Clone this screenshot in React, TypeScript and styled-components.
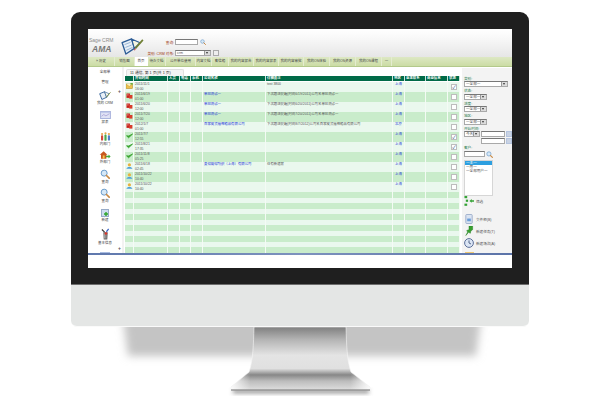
import React from "react";
import styled, { createGlobalStyle } from "styled-components";

const Global = createGlobalStyle`
  html, body { margin: 0; padding: 0; background: #fff; }
  body { font-family: "Liberation Sans", "Noto Sans CJK SC", sans-serif; overflow: hidden; }
`;

const cjk = `"Liberation Sans", "Noto Sans CJK SC", sans-serif`;

const Page = styled.div`
  width: 600px;
  height: 401px;
  padding-top: 12px;
  box-sizing: border-box;
  display: flex;
  flex-direction: column;
  align-items: center;
  overflow: hidden;
`;
const Bezel = styled.div`
  width: 458px;
  box-sizing: border-box;
  padding: 17px 17px 16px;
  background: #1f1f1f;
  border-radius: 9px 9px 0 0;
`;
const Screen = styled.div`
  height: 239px;
  background: #fff;
  display: flex;
  flex-direction: column;
  overflow: hidden;
  font-family: ${cjk};
`;
const Chin = styled.div`
  width: 458px;
  height: 43px;
  box-sizing: border-box;
  background: #e4e6e5;
  border-top: 1.5px solid #6d6d6d;
  border-bottom: 1px solid #fafafa;
  border-radius: 0 0 6px 6px;
`;
const StandArt = styled.svg`
  display: block;
  flex: none;
`;

const Header = styled.div`
  height: 28px;
  flex: none;
  display: flex;
  background: linear-gradient(#ffffff, #fafafa 25%, #e6e6e6);
`;
const Brand = styled.div`
  width: 27px;
  flex: none;
  padding: 8px 0 0 1px;
  font-size: 5px;
  line-height: 6px;
  color: #8b8b8b;
  white-space: nowrap;
`;
const BrandMark = styled.div`
  margin: 2px 0 0 3px;
  font-size: 8.5px;
  line-height: 9px;
  font-weight: 700;
  font-style: italic;
  color: #777;
`;
const BookArt = styled.svg`
  flex: none;
  margin: 9px 0 0 5px;
`;
const SearchBox = styled.div`
  margin: 9px 0 0 1px;
  display: grid;
  grid-template-columns: 30px auto;
  row-gap: 3px;
  align-items: center;
`;
const SearchLabel = styled.div`
  font-size: 3.6px;
  text-align: right;
  padding-right: 1px;
  color: #a03a10;
  white-space: nowrap;
`;
const SearchRow = styled.div`
  display: flex;
  align-items: center;
  gap: 2px;
`;
const Field = styled.div<{ $w: number; $h?: number; $hidden?: boolean }>`
  width: ${(p) => p.$w}px;
  height: ${(p) => p.$h ?? 6}px;
  box-sizing: border-box;
  flex: none;
  visibility: ${(p) => (p.$hidden ? "hidden" : "visible")};
  background: #fff;
  border: 1px solid #a9a9a9;
  border-top-color: #777;
  font-size: 3.6px;
  line-height: 4px;
  color: #555;
  padding-left: 1px;
  position: relative;
  white-space: nowrap;
`;
const SelectArrow = styled.span`
  position: absolute;
  right: 0;
  top: 0;
  bottom: 0;
  width: 5px;
  background: #dcdcdc;
  border-left: 1px solid #999;
  &::after {
    content: "";
    position: absolute;
    left: 1px;
    top: 1.2px;
    border: 1.5px solid transparent;
    border-top: 2px solid #333;
  }
`;
const MiniButton = styled.div<{ $blue?: boolean }>`
  width: 6px;
  height: 6px;
  box-sizing: border-box;
  flex: none;
  border: 1px solid ${(p) => (p.$blue ? "#b5c4de" : "#aaa")};
  background: ${(p) => (p.$blue ? "#c9d3e4" : "#eee")};
`;

const TabBar = styled.div`
  height: 10px;
  flex: none;
  display: flex;
  align-items: flex-end;
  background: linear-gradient(#dde8c4, #cbdca4);
  border-bottom: 1px solid #b3c98b;
  box-sizing: border-box;
`;
const Tab = styled.div<{ $w: number; $active?: boolean }>`
  width: ${(p) => p.$w}px;
  flex: none;
  height: 9px;
  line-height: 9px;
  font-size: 3.5px;
  text-align: center;
  color: #444;
  white-space: nowrap;
  overflow: hidden;
  background: ${(p) => (p.$active ? "#fff" : "transparent")};
  border-right: 1px solid ${(p) => (p.$active ? "#fff" : "#e4ecd0")};
  box-sizing: border-box;
`;

const Main = styled.div`
  height: 186px;
  flex: none;
  display: flex;
`;
const Sidebar = styled.div`
  width: 34px;
  flex: none;
  display: flex;
  flex-direction: column;
  align-items: center;
  border-right: 2px solid #f2f2f2;
  padding-top: 2px;
  position: relative;
  overflow: hidden;
`;
const SideItem = styled.div<{ $h: number }>`
  height: ${(p) => p.$h}px;
  flex: none;
  display: flex;
  flex-direction: column;
  align-items: center;
  justify-content: flex-end;
  gap: 1px;
`;
const SideText = styled.div`
  font-size: 3.5px;
  line-height: 5px;
  color: #444;
  white-space: nowrap;
`;
const SideMark = styled.div<{ $top: number }>`
  position: absolute;
  right: 1px;
  top: ${(p) => p.$top}px;
  font-size: 5px;
  line-height: 5px;
  font-weight: 700;
  color: #555;
`;
const SidePeek = styled.div`
  margin-top: 6px;
  width: 10px;
  height: 4px;
  flex: none;
  background: #d3def3;
  border-top: 1px solid #a9bce0;
`;

const Content = styled.div`
  width: 338px;
  flex: none;
  padding: 2px 0 0 1px;
  box-sizing: border-box;
`;
const PageTab = styled.div`
  width: 58px;
  height: 7px;
  box-sizing: border-box;
  margin-left: 1px;
  background: #f4f4f4;
  border: 1px solid #e0e0e0;
  border-bottom: none;
  border-radius: 2px 2px 0 0;
  font-size: 3.8px;
  line-height: 6px;
  padding-left: 3px;
  color: #333;
  white-space: nowrap;
`;

const columns = "9px 34px 12px 11px 12px 63px 127px 12px 21px 22px 12px";

const TableHead = styled.div`
  display: grid;
  grid-template-columns: ${columns};
  height: 5px;
  width: 335px;
  background: #006b48;
  margin-bottom: 1px;
`;
const HeadCell = styled.div`
  font-size: 3.4px;
  line-height: 5px;
  color: #fff;
  font-weight: 700;
  padding-left: 1px;
  border-right: 1px solid #cfe5d8;
  box-sizing: border-box;
  white-space: nowrap;
  overflow: hidden;
`;
const Row = styled.div<{ $alt: boolean; $h: number }>`
  display: grid;
  grid-template-columns: ${columns};
  width: 335px;
  height: ${(p) => p.$h}px;
  background: ${(p) => (p.$alt ? "#c9eccb" : "#eaf8ee")};
`;
const Cell = styled.div`
  border-right: 1px solid #f4fbf5;
  box-sizing: border-box;
  font-size: 3.4px;
  line-height: 5px;
  color: #555;
  padding-left: 1px;
  white-space: nowrap;
  overflow: hidden;
`;
const IconCell = styled(Cell)`
  padding-top: 1px;
`;
const LinkCell = styled(Cell)`
  color: #1d35d8;
`;
const CityCell = styled(LinkCell)`
  text-align: center;
  padding-left: 0;
`;
const CheckCell = styled(Cell)`
  padding: 1.5px 0 0 3px;
`;
const CheckBox = styled.div`
  width: 6px;
  height: 6px;
  box-sizing: border-box;
  background: #fff;
  border: 1px solid #bdbdbd;
  font-size: 5px;
  line-height: 4px;
  color: #123a7a;
  text-align: center;
`;

const Panel = styled.div`
  flex: 1;
  min-width: 0;
  background: #f3f3f3;
  margin-top: 1px;
  padding: 8.5px 0 0 2px;
  display: flex;
  flex-direction: column;
  overflow: hidden;
`;
const PanelLabel = styled.div`
  font-size: 3.6px;
  line-height: 4px;
  margin-bottom: 0.5px;
  color: #1f7a4d;
  white-space: nowrap;
`;
const PanelField = styled.div<{ $mb?: number }>`
  flex: none;
  margin-bottom: ${(p) => p.$mb ?? 2}px;
  display: flex;
  align-items: center;
  gap: 1px;
`;
const Picker = styled.div`
  width: 29px;
  height: 36px;
  flex: none;
  box-sizing: border-box;
  background: #fff;
  border: 1px solid #d6d6d6;
  margin-top: 0.5px;
  font-size: 3.6px;
  line-height: 4px;
  color: #555;
`;
const PickerItem = styled.div<{ $on?: boolean }>`
  background: ${(p) => (p.$on ? "#2d9fe0" : "transparent")};
  color: ${(p) => (p.$on ? "#fff" : "#555")};
  padding-left: 1px;
  white-space: nowrap;
`;
const PanelAction = styled.div<{ $mt: number }>`
  margin-top: ${(p) => p.$mt}px;
  display: flex;
  align-items: center;
  gap: 2px;
  font-size: 3.6px;
  color: #555;
  white-space: nowrap;
  height: 10px;
  flex: none;
`;
const PanelPeek = styled.div`
  margin: 4px 0 0 1px;
  width: 9px;
  height: 4px;
  flex: none;
  background: #efc873;
`;
const StatusStrip = styled.div`
  height: 2px;
  flex: none;
  background: linear-gradient(90deg, #5f78ad, #7d92bd 50%, #5b73a8);
`;

const Magnifier = ({ size = 8 }: { size?: number }) => (
  <svg width={size} height={size} viewBox="0 0 12 12">
    <circle cx="5" cy="5" r="3.6" fill="#d5e8f7" stroke="#6b9ccb" strokeWidth="1.2" />
    <path d="M7.8 7.8 11 11" stroke="#c98a45" strokeWidth="2" strokeLinecap="round" />
  </svg>
);

const RowIcon = ({ kind }: { kind: string }) => {
  if (kind === "mail")
    return (
      <svg width="7" height="6" viewBox="0 0 7 6">
        <rect y="1" width="6.5" height="4.6" fill="#eec14d" stroke="#a88526" strokeWidth=".5" />
        <path d="M0 1 3.3 3.4 6.5 1" fill="#fff2b8" stroke="#a88526" strokeWidth=".4" />
        <rect x="4.4" width="2.4" height="1.6" fill="#6cae3c" />
      </svg>
    );
  if (kind === "flag")
    return (
      <svg width="7" height="6" viewBox="0 0 7 6">
        <rect x=".5" y=".5" width="3.4" height="4.4" fill="#c8221c" />
        <rect x="3.2" y="2" width="3.2" height="3.6" fill="#d93c2c" />
        <rect x="1.4" y="1.4" width="1" height="1" fill="#f2d4c4" />
      </svg>
    );
  if (kind === "check")
    return (
      <svg width="7" height="6" viewBox="0 0 7 6">
        <path d="M.5 2.8 2.6 4.8 6.6 1 2.7 2.9Z" fill="#3aa52f" stroke="#3aa52f" strokeWidth=".8" />
      </svg>
    );
  return (
    <svg width="7" height="6" viewBox="0 0 7 6">
      <circle cx="3.4" cy="1.8" r="1.6" fill="#e8b23c" />
      <path d="M.4 5.8C.8 3.4 6 3.4 6.4 5.8Z" fill="#4ea0d8" />
    </svg>
  );
};

const Book = () => (
  <BookArt width="23" height="17" viewBox="0 0 24 18">
    <path d="M1 5 11 1 14 11 5 17Z" fill="#e6eef7" stroke="#2c5c96" strokeWidth="1.4" strokeLinejoin="round" />
    <path d="M11 1 20 5 14 11Z" fill="#f5f5e0" stroke="#2c5c96" strokeWidth="1.2" strokeLinejoin="round" />
    <path d="M3.5 7 10 4.5M4.5 10 11 7.5M5.500 13 12 10" stroke="#7fa3c8" strokeWidth=".8" />
    <path d="M23 2 15 11" stroke="#6f7f34" strokeWidth="1.8" />
    <path d="M15 11 14 13" stroke="#c44" strokeWidth="1.2" />
  </BookArt>
);

const SideIcon = ({ kind }: { kind: string }) => {
  switch (kind) {
    case "crm":
      return (
        <svg width="12" height="9" viewBox="0 0 13 10">
          <path d="M.6 3 6 .8 8.3 7 3 9.4Z" fill="#e9f0f7" stroke="#2f5f97" />
          <path d="M6 .8 11 3 8.3 7Z" fill="#f6f6e8" stroke="#2f5f97" strokeWidth=".7" />
          <path d="M12.6 1.5 8 7" stroke="#7b8b3a" />
        </svg>
      );
    case "report":
      return (
        <svg width="11" height="8" viewBox="0 0 12 9">
          <rect x=".5" y=".5" width="11" height="8" fill="#dfe2f4" stroke="#a3add9" />
          <path d="M1.5 6 4 4l2.5 1.5L10.5 3" fill="none" stroke="#a29ad4" strokeWidth=".8" />
          <rect x="1" y="1" width="10" height="1.2" fill="#c0c8ea" />
        </svg>
      );
    case "people":
      return (
        <svg width="11" height="9" viewBox="0 0 12 10">
          <circle cx="2.2" cy="2.2" r="1.2" fill="#e4a24a" />
          <rect x="1" y="3.5" width="2.4" height="6" rx="1" fill="#d0483c" />
          <circle cx="6" cy="1.5" r="1.2" fill="#e4a24a" />
          <rect x="4.8" y="2.8" width="2.4" height="7" rx="1" fill="#4aa84e" />
          <circle cx="9.8" cy="2.2" r="1.2" fill="#e4a24a" />
          <rect x="8.6" y="3.5" width="2.4" height="6" rx="1" fill="#5080c8" />
        </svg>
      );
    case "home":
      return (
        <svg width="12" height="8" viewBox="0 0 13 9">
          <path d="M5 .3 .5 4.3H2v4.4h6V4.3h1.2Z" fill="#c9581f" />
          <rect x="4" y="5" width="2" height="3.7" fill="#f1c94f" />
          <path d="M7.5 5.3h3V4l2.3 2.2-2.3 2.2V7.1h-3Z" fill="#42a838" />
        </svg>
      );
    case "new":
      return (
        <svg width="8" height="8" viewBox="0 0 8 8">
          <rect x=".5" y=".5" width="7" height="7" fill="#cddcf0" stroke="#97abc8" />
          <path d="M5 3v4M3 5h4" stroke="#2ea52a" strokeWidth="1.4" />
        </svg>
      );
    default:
      return (
        <svg width="9" height="12" viewBox="0 0 10 13">
          <path d="M2.5 4.5h5L7 12.5H3Z" fill="#666" />
          <path d="M3.6 5.5 4 11.5M5.5 5.5 5.4 11.5" stroke="#ddd" strokeWidth=".6" />
          <path d="M1 1.5 4 4.5" stroke="#333" strokeWidth="1.2" />
          <path d="M8.5.8 6 4" stroke="#3b64c4" strokeWidth="1.4" />
          <circle cx="5.5" cy="6" r="1.4" fill="#d8342a" />
        </svg>
      );
  }
};

const PanelIcon = ({ kind }: { kind: string }) => {
  if (kind === "filter")
    return (
      <svg width="10" height="10" viewBox="0 0 11 11">
        <g fill="#35a336">
          <rect x=".5" y="0" width="3" height="2.4" />
          <rect x=".5" y="8.4" width="3" height="2.4" />
          <path d="M6 5.4 8.5 3.4v1.3H11v1.5H8.5v1.3Z" />
          <rect x="2" y="4" width="2.5" height="2.4" />
        </g>
      </svg>
    );
  if (kind === "file")
    return (
      <svg width="10" height="10" viewBox="0 0 10 11">
        <rect x="1.5" y=".5" width="7" height="10" rx="1" fill="#dbe4f2" stroke="#9aabc9" />
        <rect x="3" y="5" width="4" height="3" fill="#6a9dd8" />
      </svg>
    );
  if (kind === "pin")
    return (
      <svg width="10" height="10" viewBox="0 0 10 11">
        <path d="M5 0h4v4L7 5.5 6.5 8l-2-1-3 3.5 2-3.8L2.5 5 5 4Z" fill="#38a02f" stroke="#217a1f" strokeWidth=".5" />
      </svg>
    );
  return (
    <svg width="10" height="10" viewBox="0 0 10 10">
      <circle cx="5" cy="5" r="4.4" fill="#dbe5f4" stroke="#5c6f98" strokeWidth="1" />
      <path d="M5 2.4V5l2 1" fill="none" stroke="#33466e" strokeWidth=".8" />
    </svg>
  );
};

const tabs: [string, number][] = [
  ["»      历史", 27], ["销售图", 20], ["首页", 13], ["待办文档", 18], ["公开单位使用", 30],
  ["内容文档", 16], ["客信箱", 17], ["我的内容报告", 25], ["我的内容报表", 25], ["我的内容审批", 25],
  ["我的OS体验", 26], ["我的OS资源", 26], ["我的OS课程", 26], ["一", 10],
];
const heads = ["", "开始时间", "人员", "电话", "手机", "公司名称", "详细备注", "地区", "业主联系", "商业信息", "状态"];

type Rec = { icon: string; d: string; t: string; co?: string; note?: string; city: string; on?: boolean };
const records: Rec[] = [
  { icon: "mail", d: "2011/11/1", t: "16:00", note: "test 3800", city: "上海", on: true },
  { icon: "flag", d: "2011/6/19", t: "01:00", co: "单应测试一", note: "下次跟进提醒(时间6/19/2011)公司名单应测试一", city: "上海" },
  { icon: "flag", d: "2011/6/20", t: "12:00", co: "单应测试一", note: "下次跟进提醒(时间6/20/2011)公司名单应测试一", city: "上海" },
  { icon: "flag", d: "2011/7/20", t: "12:00", co: "单应测试一", note: "下次跟进提醒(时间7/20/2011)公司名单应测试一", city: "上海" },
  { icon: "flag", d: "2012/1/7", t: "01:00", co: "百家皮货福神箱品有限公司", note: "下次跟进提醒(时间8/7/2012)公司名百家皮货福神箱品有限公司", city: "北京" },
  { icon: "check", d: "2011/7/7", t: "12:55", city: "上海", on: true },
  { icon: "check", d: "2011/8/21", t: "17:35", city: "上海", on: true },
  { icon: "check", d: "2011/11/8", t: "05:25", city: "上海" },
  { icon: "user", d: "2011/6/18", t: "02:45", co: "夏得露得纺织（上海）有限公司", note: "住有新建房", city: "上海" },
  { icon: "user", d: "2011/10/22", t: "10:40", city: "上海" },
  { icon: "user", d: "2011/10/22", t: "10:40", city: "上海" },
];

const neckPath = "M254 328H346C346.5 345 347 362 351 373L370 388V391H231V388L249 373C253 362 253.5 345 254 328Z";

const Stand = () => (
  <StandArt width="458" height="73" viewBox="71 328 458 73">
    <defs>
      <linearGradient id="neck" x1="0" y1="0" x2="0" y2="1">
        <stop offset="0" stopColor="#7f7f7f" />
        <stop offset=".2" stopColor="#b4b4b4" />
        <stop offset=".45" stopColor="#e4e4e4" />
        <stop offset=".66" stopColor="#e0e0e0" />
        <stop offset=".76" stopColor="#878787" />
        <stop offset=".86" stopColor="#bdbdbd" />
        <stop offset="1" stopColor="#dedede" />
      </linearGradient>
      <linearGradient id="neckSides" x1="0" y1="0" x2="1" y2="0">
        <stop offset="0" stopColor="#fff" stopOpacity=".9" />
        <stop offset=".14" stopColor="#fff" stopOpacity="0" />
        <stop offset=".86" stopColor="#fff" stopOpacity="0" />
        <stop offset="1" stopColor="#fff" stopOpacity=".9" />
      </linearGradient>
      <filter id="soft" x="-10%" y="-30%" width="120%" height="170%">
        <feGaussianBlur stdDeviation="4" />
      </filter>
      <filter id="softer" x="-10%" y="-100%" width="120%" height="300%">
        <feGaussianBlur stdDeviation="2" />
      </filter>
    </defs>
    <path d="M122 312H482L476 357H128Z" fill="#c4c4c4" filter="url(#soft)" />
    <rect x="233" y="391" width="136" height="3" fill="#777" filter="url(#softer)" />
    <path d={neckPath} fill="url(#neck)" />
    <path d={neckPath} fill="url(#neckSides)" stroke="#f6f6f6" strokeWidth=".6" />
    <path d="M231 391H370" stroke="#6c6c6c" strokeWidth="1.2" />
  </StandArt>
);

const App = () => {
  const empties = Array.from({ length: 11 }, (_, i) => i);
  return (
    <Page>
      <Global />
      <Bezel>
        <Screen>
          <Header>
            <Brand>
              Sage CRM
              <BrandMark>AMA</BrandMark>
            </Brand>
            <Book />
            <SearchBox>
              <SearchLabel>查询:</SearchLabel>
              <SearchRow>
                <Field $w={23} />
                <Magnifier size={6} />
              </SearchRow>
              <SearchLabel>类别: CRM 对象:</SearchLabel>
              <SearchRow>
                <Field $w={36}>
                  crm
                  <SelectArrow />
                </Field>
                <MiniButton />
              </SearchRow>
            </SearchBox>
          </Header>
          <TabBar>
            {tabs.map(([label, w]) => (
              <Tab key={label} $w={w} $active={label === "首页"}>
                {label}
              </Tab>
            ))}
          </TabBar>
          <Main>
            <Sidebar>
              <SideItem $h={5.5}><SideText>全部单</SideText></SideItem>
              <SideItem $h={10}><SideText>管理</SideText></SideItem>
              <SideItem $h={21}><SideIcon kind="crm" /><SideText>我的 CRM</SideText></SideItem>
              <SideItem $h={19}><SideIcon kind="report" /><SideText>报表</SideText></SideItem>
              <SideItem $h={22}><SideIcon kind="people" /><SideText>内部门</SideText></SideItem>
              <SideItem $h={18}><SideIcon kind="home" /><SideText>外部门</SideText></SideItem>
              <SideItem $h={20}><Magnifier size={10} /><SideText>查询</SideText></SideItem>
              <SideItem $h={19}><Magnifier size={10} /><SideText>查询</SideText></SideItem>
              <SideItem $h={19}><SideIcon kind="new" /><SideText>新建</SideText></SideItem>
              <SideItem $h={23}><SideIcon kind="info" /><SideText>基本信息</SideText></SideItem>
              <SidePeek />
              <SideMark $top={22}>+</SideMark>
              <SideMark $top={179}>+</SideMark>
            </Sidebar>
            <Content>
              <PageTab>11 通信, 第 1 页(共 1 页)</PageTab>
              <TableHead>
                {heads.map((h, i) => (
                  <HeadCell key={i}>{h}</HeadCell>
                ))}
              </TableHead>
              {records.map((r, i) => (
                <Row key={i} $alt={i % 2 === 1} $h={10}>
                  <IconCell><RowIcon kind={r.icon} /></IconCell>
                  <Cell>{r.d}<br />{r.t}</Cell>
                  <Cell />
                  <Cell />
                  <Cell />
                  <LinkCell>{r.co}</LinkCell>
                  <Cell>{r.note}</Cell>
                  <CityCell>{r.city}</CityCell>
                  <Cell />
                  <Cell />
                  <CheckCell>
                    <CheckBox>{r.on ? "✓" : ""}</CheckBox>
                  </CheckCell>
                </Row>
              ))}
              {empties.map((i) => (
                <Row key={i} $alt={i % 2 === 0} $h={5.5}>
                  {heads.map((_, c) => (
                    <Cell key={c} />
                  ))}
                </Row>
              ))}
            </Content>
            <Panel>
              <PanelLabel>类别:</PanelLabel>
              <PanelField><Field $w={44}>一全部一<SelectArrow /></Field></PanelField>
              <PanelLabel>状态:</PanelLabel>
              <PanelField><Field $w={23}>一全部一<SelectArrow /></Field></PanelField>
              <PanelLabel>进度:</PanelLabel>
              <PanelField><Field $w={23}>一全部一<SelectArrow /></Field></PanelField>
              <PanelLabel>地区:</PanelLabel>
              <PanelField><Field $w={23}>一全部一<SelectArrow /></Field></PanelField>
              <PanelLabel>开始时间:</PanelLabel>
              <PanelField $mb={1}>
                <Field $w={16}>今天<SelectArrow /></Field>
                <Field $w={24} />
                <MiniButton $blue />
              </PanelField>
              <PanelField>
                <Field $w={16} $hidden />
                <Field $w={24} />
                <MiniButton $blue />
              </PanelField>
              <PanelLabel>客户:</PanelLabel>
              <PanelField>
                <Field $w={21} />
                <Magnifier size={7} />
              </PanelField>
              <Picker>
                <PickerItem $on>一主一</PickerItem>
                <PickerItem>一用一</PickerItem>
                <PickerItem>一全部用户一</PickerItem>
              </Picker>
              <PanelAction $mt={0}><PanelIcon kind="filter" />筛选</PanelAction>
              <PanelAction $mt={8}><PanelIcon kind="file" />文件柜(B)</PanelAction>
              <PanelAction $mt={2}><PanelIcon kind="pin" />新建任务(T)</PanelAction>
              <PanelAction $mt={2}><PanelIcon kind="clock" />新建场次(A)</PanelAction>
              <PanelPeek />
            </Panel>
          </Main>
          <StatusStrip />
        </Screen>
      </Bezel>
      <Chin />
      <Stand />
    </Page>
  );
};

export default App;
